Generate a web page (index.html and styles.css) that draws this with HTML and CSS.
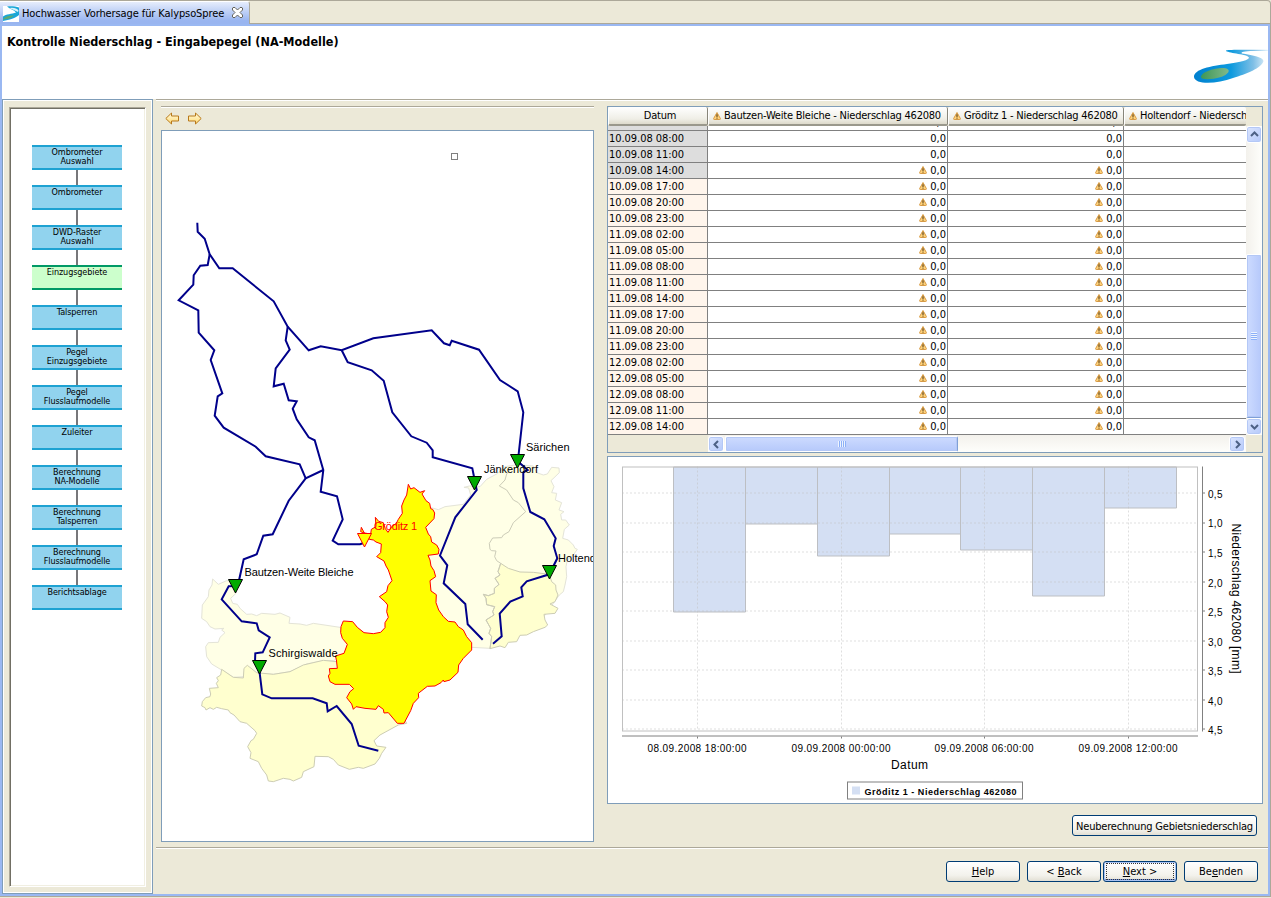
FILE: index.html
```html
<!DOCTYPE html>
<html lang="de">
<head>
<meta charset="utf-8">
<title>Hochwasser Vorhersage für KalypsoSpree</title>
<link rel="stylesheet" href="styles.css">
</head>
<body>
<svg class="defs" width="0" height="0">
  <defs>
    <linearGradient id="river" x1="0" x2="1"><stop offset="0" stop-color="#0080cf"/><stop offset=".5" stop-color="#0d9ade"/><stop offset=".8" stop-color="#7fbfe6"/><stop offset="1" stop-color="#e8f3fa"/></linearGradient>
    <linearGradient id="lake" x1="0" x2="1"><stop offset="0" stop-color="#3f9757"/><stop offset="1" stop-color="#80b98a"/></linearGradient>
    <linearGradient id="gold" x1="0" x2="0" y1="0" y2="1"><stop offset="0" stop-color="#fffbe0"/><stop offset="1" stop-color="#ffd970"/></linearGradient>
    <symbol id="warn" viewBox="0 0 8 8"><path d="M4 .5 7.4 6.6Q7.500 7.500 6.800 7.500H1.200Q.5 7.500.6 6.600Z" fill="#ffd27a" stroke="#d79a45"/><path d="M4 2.300v2.600M4 5.600v1" stroke="#3d2500" stroke-width="1"/></symbol>
    <symbol id="gauge" viewBox="-8 -1 16 16" overflow="visible"><path d="M-7 .5H7L0 14Z"/></symbol>
  </defs>
</svg>
<div class="window">
  <div class="tabbar">
    <div class="tab">
      <svg class="tab-icon" width="16" height="16" viewBox="0 0 16 16"><path d="M0 0h16v16H0z" fill="#fff"/><path d="M4 .5C8 0 13 .5 16 1.500V9C13 12 6 14 0 15V10.500C3 8 9 8 13 6.500 11 4 7 3 4 .5Z" fill="#19a6d8"/><path d="M6 2Q13 1 15.500 4.500L15 6Q10 3.500 6 2Z" fill="#d9f2fb"/><path d="M0 13Q3 9 11 9.500 8 13 0 13.500Z" fill="#5aa973"/></svg>
      <span class="tab-title">Hochwasser Vorhersage für KalypsoSpree</span>
      <svg class="tab-close" width="11" height="11" viewBox="0 0 11 11"><path d="M1 .5H3L5.500 3 8 .5H10L10.500 1V3L8 5.500 10.500 8V10L10 10.500H8L5.500 8 3 10.500H1L.5 10V8L3 5.500.5 3V1Z" fill="#fff" stroke="#66645c"/></svg>
    </div>
    <div class="tab-rest"></div>
  </div>
  <div class="frame">
    <header class="title-area">
      <h1>Kontrolle Niederschlag - Eingabepegel (NA-Modelle)</h1>
      <svg class="logo" width="75" height="36" viewBox="0 0 75 36"><path d="M33 1.500C38 .3 55 1 75 .8V2H60C52 2 47 3 49 4.500 58 6 70 8 70.500 12 69 19 53 25 40 29 24 35 2 36 1 28 1 20 18 17 34 15 48 13 56 11 56 8.500 54 5 37 4.500 33 2Z" fill="url(#river)"/><path d="M8 28C8 23 22 18.500 31 19 39 20 36 25 28 28 18 31 8 31 8 28Z" fill="url(#lake)"/></svg>
    </header>
    <div class="main">
      <aside class="side">
        <div class="flow">
          <div class="node">Ombrometer<br>Auswahl</div>
          <div class="node">Ombrometer</div>
          <div class="node">DWD-Raster<br>Auswahl</div>
          <div class="node active">Einzugsgebiete</div>
          <div class="node">Talsperren</div>
          <div class="node">Pegel<br>Einzugsgebiete</div>
          <div class="node">Pegel<br>Flusslaufmodelle</div>
          <div class="node">Zuleiter</div>
          <div class="node">Berechnung<br>NA-Modelle</div>
          <div class="node">Berechnung<br>Talsperren</div>
          <div class="node">Berechnung<br>Flusslaufmodelle</div>
          <div class="node">Berichtsablage</div>
        </div>
      </aside>
      <div class="page">
        <div class="content">
          <section class="map-col">
            <div class="map-tools">
              <svg width="14" height="13" viewBox="0 0 14 13"><path d="M.8 6.500 6.500 1V4H13.500V9H6.500V12Z" fill="url(#gold)" stroke="#b8791a"/></svg>
              <svg width="14" height="13" viewBox="0 0 14 13"><path d="M13.200 6.500 7.500 1V4H.5V9H7.500V12Z" fill="url(#gold)" stroke="#b8791a"/></svg>
            </div>
            <svg class="map" width="431" height="710" viewBox="162 131 431 710">
              <g class="areas" transform="translate(190 460) scale(.33333)">
                <path class="pale" d="M68 357 85 373 110 362 130 365 138 400 122 415 128 430 142 433 150 445 170 463 185 462 200 467 215 460 255 463 270 459 300 472 297 490 330 492 350 496 370 490 450 502 500 560 430 602 400 602 350 612 300 635 250 643 200 640 165 625 160 650 130 652 95 630 65 612 50 590 47 560 55 548 85 547 90 532 105 518 95 510 102 505 75 507 60 500 50 485 35 475 37 435 55 410 57 390 66 375Z"/>
                <path class="cream" d="M95 628 130 652 160 654 162 625 172 616 200 638 250 643 300 635 340 615 400 601 440 605 600 700 650 790 625 795 570 825 552 842 560 858 588 862 575 880 568 895 555 912 520 925 505 922 478 928 445 915 430 898 415 890 375 889 372 920 340 935 335 952 310 963 300 958 280 955 250 965 235 963 230 945 215 925 205 905 180 895 183 878 173 860 183 842 190 838 200 820 195 812 170 790 150 785 132 765 120 758 115 750 95 746 80 742 70 748 60 743 48 750 45 743 35 738 37 725 47 713 60 710 62 702 58 685 85 683 79 670 85 662 80 653 92 645Z"/>
              </g>
              <g class="areas" transform="translate(320 460) scale(.33333)">
                <path class="pale" d="M330 142 355 149 375 140 430 133 452 105 446 84 432 82 448 78 480 80 500 58 530 42 555 20 590 14 640 18 650 38 670 45 682 42 695 22 717 24 718 38 693 62 702 80 695 98 710 100 706 120 725 128 717 150 732 155 722 163 725 180 737 180 748 195 733 208 728 235 745 240 760 255 765 265 772 268 760 285 742 300 738 320 740 350 735 375 730 395 718 405 650 500 510 565 455 562 300 500 250 350Z"/>
                <path class="cream" d="M542 310 565 325 600 336 640 337 688 343 695 365 707 375 708 390 714 405 705 425 690 432 714 445 705 460 672 463 675 480 683 495 675 502 640 515 620 525 600 526 590 545 565 547 555 563 540 558 510 566 515 530 507 520 512 505 498 480 522 465 518 455 524 440 500 434 498 415 490 403 505 407 523 400 523 385 537 373 525 355 540 345 534 335Z"/>
                <path class="divide" d="M575 25 560 42 555 60 538 78 560 90 580 120 595 128 617 155 580 188 567 215 550 225 545 233 518 234 508 250 510 268 515 272 528 273 524 290 530 302 542 310 534 335 540 345 525 355 537 373 523 385 523 400 505 407 490 403 498 415 500 434 524 440 518 455 522 465 498 480 512 505 507 520 515 530 510 566"/>
                <path class="picked" d="M265 73 272 87 282 83 300 97 314 92 306 102 318 122 329 130 332 146 338 148 344 159 342 176 317 202 325 222 332 230 335 246 350 255 357 268 355 282 324 286 330 300 333 318 342 332 347 350 330 362 333 393 349 404 348 428 356 450 370 470 385 484 405 486 415 500 430 510 440 530 455 548 455 570 430 595 416 615 414 637 390 660 372 665 370 660 363 668 345 678 322 679 295 700 296 713 280 730 272 752 252 790 232 790 205 758 192 759 190 748 175 737 168 748 135 745 108 740 100 748 95 732 80 713 90 695 101 686 88 673 45 673 30 665 25 648 30 640 28 626 52 625 49 598 46 588 72 580 82 553 67 535 62 518 63 500 70 483 98 485 112 502 132 518 160 521 182 517 195 503 195 488 205 472 200 455 203 435 195 425 178 410 200 395 204 377 216 362 205 330 198 318 192 303 170 290 182 278 184 252 168 246 160 240 148 238 140 222 122 215 124 202 133 219 152 222 154 208 168 200 166 172 176 184 190 188 196 206 204 217 215 200 229 190 235 178 247 160 245 138 252 120 260 105Z"/>
              </g>
              <g class="rivers">
                <path d="M197.300 222.700 197.700 231.700 204.700 238.700 209.700 254.300 219.300 268.300H232.700L273.700 301.300 287.700 326.700 308.700 350.300 320.700 346.300 341.700 350.300 373.300 338.300 431.700 330.300 444 343.300 449.700 345.300 451.700 340.700 479 349.700 500 380 517.700 391.300 523.300 412.300 518 460 520 463.300 527.700 470 523.300 472.300V488.300L530.300 512 544.300 519.300 555.700 538.300 553.700 546 557.300 558.300 549.300 574.300 526.700 581.300 521.300 587.300 522.700 596.300 510.300 601.700 499.700 613.700 501.700 636.300 493 643.700"/>
                <path d="M341.700 350.300 347.700 362.300 371.700 370.300 383.700 380.700 392.300 412.300 411.300 436.300 426.700 442.700 432.700 450.300V457.300L472.300 468.300 476.700 490 455.300 517.300 440 555.500 447.300 565.300 443.700 583.300 465.300 604 467.700 624.300 482.700 639.700"/>
                <path d="M209.700 254.300 207.700 265 200.300 265.700 193.700 275.300 193.300 284.700 178.700 300.300 198.300 310.300 198.700 332.700 214.300 350.300 210.700 360 222.300 393.300 217.700 396.300 214.700 415.700 223.700 427.700 255.700 446.700 265.700 456.300 299.700 464.300 305.700 478.300"/>
                <path d="M287.700 326.700 285.700 340.300 289.700 349.700 275.700 368.300 273.700 386.300 283.700 383.700 288.700 400.300 296.700 401.300 292.700 408.700 296.700 419.300 308.700 437.300 314.700 440.300 323.300 470 320.700 491.700 337 496.300 342.700 519.300 332.700 540.700 338.300 544.300H360L364.300 542.700"/>
                <path d="M323.300 470 305.700 478.300 288.700 500.700 272.700 534.300 263.300 535.700 256.700 554.300 243.700 559.300 239.300 579 235 586 228.700 586.300 221.700 599.300 241.700 621.300 256.700 623.300 258.700 630.300 269.700 637.300 262.700 652.300 255.300 653.300 255 661.700 259.700 673.300 262.300 694.300 271.700 698.300H312.700L326.700 703.300 327.700 711.300 336.700 706 351.700 724 358.700 745.700 378.300 750.700"/>
              </g>
              <g class="gauges">
                <use href="#gauge" x="509.500" y="453" width="16" height="16"/>
                <use href="#gauge" x="466.500" y="475" width="16" height="16"/>
                <use href="#gauge" x="541.500" y="564" width="16" height="16"/>
                <use href="#gauge" x="227.500" y="578" width="16" height="16"/>
                <use href="#gauge" x="251.500" y="659" width="16" height="16"/>
                <use class="gauge-picked" href="#gauge" x="356.500" y="532" width="16" height="16"/>
              </g>
              <rect class="handle" x="451.500" y="153.500" width="6" height="6"/>
              <g class="labels">
                <text x="526" y="451" textLength="43.500">Särichen</text>
                <text x="484" y="473" textLength="54">Jänkendorf</text>
                <text x="558" y="562">Holtendorf</text>
                <text x="244.500" y="576" textLength="109">Bautzen-Weite Bleiche</text>
                <text x="268.500" y="657" textLength="69">Schirgiswalde</text>
                <text class="picked-label" x="374" y="530" textLength="43">Gröditz 1</text>
              </g>
            </svg>
          </section>
          <section class="data-col">
            <div class="table-box">
              <div class="table-area">
                <div class="grid-head">
                  <div class="hcell center">Datum</div>
                  <div class="hcell"><svg class="w"><use href="#warn"/></svg>Bautzen-Weite Bleiche - Niederschlag 462080</div>
                  <div class="hcell"><svg class="w"><use href="#warn"/></svg>Gröditz 1 - Niederschlag 462080</div>
                  <div class="hcell last"><svg class="w"><use href="#warn"/></svg>Holtendorf - Niederschlag 462080</div>
                </div>
                <div class="clip"><div class="row past"><b></b><i>0,0</i><i>0,0</i><i></i></div></div>
                <div class="row past"><b>10.09.08 08:00</b><i>0,0</i><i>0,0</i><i></i></div>
                <div class="row past"><b>10.09.08 11:00</b><i>0,0</i><i>0,0</i><i></i></div>
                <div class="row past"><b>10.09.08 14:00</b><i><svg class="w"><use href="#warn"/></svg>0,0</i><i><svg class="w"><use href="#warn"/></svg>0,0</i><i></i></div>
                <div class="row"><b>10.09.08 17:00</b><i><svg class="w"><use href="#warn"/></svg>0,0</i><i><svg class="w"><use href="#warn"/></svg>0,0</i><i></i></div>
                <div class="row"><b>10.09.08 20:00</b><i><svg class="w"><use href="#warn"/></svg>0,0</i><i><svg class="w"><use href="#warn"/></svg>0,0</i><i></i></div>
                <div class="row"><b>10.09.08 23:00</b><i><svg class="w"><use href="#warn"/></svg>0,0</i><i><svg class="w"><use href="#warn"/></svg>0,0</i><i></i></div>
                <div class="row"><b>11.09.08 02:00</b><i><svg class="w"><use href="#warn"/></svg>0,0</i><i><svg class="w"><use href="#warn"/></svg>0,0</i><i></i></div>
                <div class="row"><b>11.09.08 05:00</b><i><svg class="w"><use href="#warn"/></svg>0,0</i><i><svg class="w"><use href="#warn"/></svg>0,0</i><i></i></div>
                <div class="row"><b>11.09.08 08:00</b><i><svg class="w"><use href="#warn"/></svg>0,0</i><i><svg class="w"><use href="#warn"/></svg>0,0</i><i></i></div>
                <div class="row"><b>11.09.08 11:00</b><i><svg class="w"><use href="#warn"/></svg>0,0</i><i><svg class="w"><use href="#warn"/></svg>0,0</i><i></i></div>
                <div class="row"><b>11.09.08 14:00</b><i><svg class="w"><use href="#warn"/></svg>0,0</i><i><svg class="w"><use href="#warn"/></svg>0,0</i><i></i></div>
                <div class="row"><b>11.09.08 17:00</b><i><svg class="w"><use href="#warn"/></svg>0,0</i><i><svg class="w"><use href="#warn"/></svg>0,0</i><i></i></div>
                <div class="row"><b>11.09.08 20:00</b><i><svg class="w"><use href="#warn"/></svg>0,0</i><i><svg class="w"><use href="#warn"/></svg>0,0</i><i></i></div>
                <div class="row"><b>11.09.08 23:00</b><i><svg class="w"><use href="#warn"/></svg>0,0</i><i><svg class="w"><use href="#warn"/></svg>0,0</i><i></i></div>
                <div class="row"><b>12.09.08 02:00</b><i><svg class="w"><use href="#warn"/></svg>0,0</i><i><svg class="w"><use href="#warn"/></svg>0,0</i><i></i></div>
                <div class="row"><b>12.09.08 05:00</b><i><svg class="w"><use href="#warn"/></svg>0,0</i><i><svg class="w"><use href="#warn"/></svg>0,0</i><i></i></div>
                <div class="row"><b>12.09.08 08:00</b><i><svg class="w"><use href="#warn"/></svg>0,0</i><i><svg class="w"><use href="#warn"/></svg>0,0</i><i></i></div>
                <div class="row"><b>12.09.08 11:00</b><i><svg class="w"><use href="#warn"/></svg>0,0</i><i><svg class="w"><use href="#warn"/></svg>0,0</i><i></i></div>
                <div class="row"><b>12.09.08 14:00</b><i><svg class="w"><use href="#warn"/></svg>0,0</i><i><svg class="w"><use href="#warn"/></svg>0,0</i><i></i></div>
                <div class="hscroll">
                  <div class="sbtn"><svg width="9" height="9" viewBox="0 0 9 9"><path d="M6 1 2.500 4.500 6 8"/></svg></div>
                  <div class="hthumb"><span class="grip"></span></div>
                  <div class="space"></div>
                  <div class="sbtn"><svg width="9" height="9" viewBox="0 0 9 9"><path d="M3 1 6.500 4.500 3 8"/></svg></div>
                </div>
              </div>
              <div class="vscroll">
                <div class="sbtn"><svg width="9" height="9" viewBox="0 0 9 9"><path d="M1 6 4.500 2.500 8 6"/></svg></div>
                <div class="space"></div>
                <div class="vthumb"><span class="grip"></span></div>
                <div class="sbtn"><svg width="9" height="9" viewBox="0 0 9 9"><path d="M1 3 4.500 6.500 8 3"/></svg></div>
              </div>
            </div>
            <svg class="chart" width="654" height="345" viewBox="608 458 654 345">
              <g class="plot">
                <path class="bars" d="M673.500 467.500H745.500V612.500H673.500ZM745.500 467.500H817.500V524.500H745.500ZM817.500 467.500H889.500V556.500H817.500ZM889.500 467.500H960.500V534.500H889.500ZM960.500 467.500H1032.500V550.500H960.500ZM1032.500 467.500H1104.500V596.500H1032.500ZM1104.500 467.500H1176.500V508.500H1104.500Z"/>
                <path class="gridlines" d="M697.500 467V731M841.500 467V731M984.500 467V731M1128.500 467V731M622 493.500H1197M622 523.500H1197M622 552.500H1197M622 582.500H1197M622 611.500H1197M622 641.500H1197M622 670.500H1197M622 700.500H1197M622 729.500H1197"/>
                <rect class="plot-border" x="622.500" y="467.500" width="575" height="264"/>
                <path class="axis" d="M622 736.500H1198M1202.500 467V732M697.500 737V739M841.500 737V739M984.500 737V739M1128.500 737V739M1203 493.500H1205M1203 523.500H1205M1203 552.500H1205M1203 582.500H1205M1203 611.500H1205M1203 641.500H1205M1203 670.500H1205M1203 700.500H1205M1203 729.500H1205"/>
              </g>
              <g class="ticks">
                <text x="1208" y="498" textLength="14.500">0,5</text><text x="1208" y="527" textLength="14.500">1,0</text><text x="1208" y="557" textLength="14.500">1,5</text><text x="1208" y="587" textLength="14.500">2,0</text><text x="1208" y="616" textLength="14.500">2,5</text><text x="1208" y="646" textLength="14.500">3,0</text><text x="1208" y="675" textLength="14.500">3,5</text><text x="1208" y="705" textLength="14.500">4,0</text><text x="1208" y="734" textLength="14.500">4,5</text>
                <text x="647.500" y="752" textLength="99">08.09.2008 18:00:00</text>
                <text x="791.500" y="752" textLength="99">09.09.2008 00:00:00</text>
                <text x="934.500" y="752" textLength="99">09.09.2008 06:00:00</text>
                <text x="1078.500" y="752" textLength="99">09.09.2008 12:00:00</text>
              </g>
              <text class="axis-name" x="891" y="769" textLength="37">Datum</text>
              <text class="axis-name" transform="translate(1231.500 524) rotate(90)" textLength="150">Niederschlag 462080 [mm]</text>
              <rect class="legend-box" x="847.500" y="782.500" width="175" height="17"/>
              <rect x="852" y="787" width="8" height="8" fill="#d4dff3"/>
              <text class="legend-text" x="864.500" y="795" textLength="152">Gröditz 1 - Niederschlag 462080</text>
            </svg>
            <div class="action"><button class="btn wide">Neuberechnung Gebietsniederschlag</button></div>
          </section>
        </div>
        <footer class="wizard">
          <button class="btn"><span><u>H</u>elp</span></button>
          <button class="btn back"><span>&lt; <u>B</u>ack</span></button>
          <button class="btn default"><span><u>N</u>ext &gt;</span></button>
          <button class="btn finish"><span>Be<u>e</u>nden</span></button>
        </footer>
      </div>
    </div>
  </div>
</div>
</body>
</html>
```
FILE: styles.css
```css
* { box-sizing: border-box; }
body {
  margin: 0;
  width: 1271px;
  height: 898px;
  overflow: hidden;
  background: #ece9d8;
  color: #000;
  font: 11px/14px "DejaVu Sans Condensed", "DejaVu Sans", sans-serif;
  font-stretch: condensed;
}
.defs { display: block; position: absolute; }
.window { height: 897px; width: 1271px; border: 1px solid #aca899; border-left: 0; border-top-right-radius: 4px; display: flex; flex-direction: column; }
.tabbar { height: 23px; display: flex; flex: none; }
.tab { width: 250px; display: flex; align-items: center; padding: 2px 0 0 3px; border-right: 1px solid #aca899; border-top: 1px solid #fff; border-top-right-radius: 3px; background: linear-gradient(#e6edfc, #99b5f0 85%); }
.tab-icon { flex: none; }
.tab-title { margin-left: 3px; width: 203px; white-space: nowrap; font-size: 11px; letter-spacing: -.1px; }
.tab-close { margin-left: 7px; margin-bottom: 3px; flex: none; }
.tab-rest { flex: 1; border-bottom: 1px solid #aca899; }
.frame { flex: 1; border: 2px solid #9ab8f2; display: flex; flex-direction: column; min-height: 0; }
.title-area { height: 73px; flex: none; background: #fff; display: flex; justify-content: space-between; padding: 9px 0 0 5px; }
h1 { margin: 0; font-size: 12.500px; line-height: 14px; font-weight: bold; letter-spacing: .02px; white-space: nowrap; }
.logo { margin-top: 14px; }
.main { flex: 1; display: flex; min-height: 0; }
.side { width: 151px; flex: none; border: 1px solid #7f9db9; padding: 7px 6px 6px 6px; box-shadow: inset 0 0 0 1px #fff; display: flex; }
.flow { flex: 1; background: #fff; border: 1px solid; border-color: #aca899 #fff #fff #aca899; box-shadow: inset 1px 1px #716f64, inset -1px -1px #f1efe2; padding: 37px 0 0 22px; display: flex; flex-direction: column; gap: 15px; }
.node { position: relative; width: 90px; height: 25px; background: #91d3ee; border: solid #1ea2d2; border-width: 2px 0; text-align: center; font-size: 9px; line-height: 9px; white-space: nowrap; letter-spacing: -.1px; padding-top: 1px; }
.node.active { background: #ccffcc; border-color: #009966; }
.node:not(:last-child)::after { content: ""; position: absolute; left: 44px; top: 23px; width: 2px; height: 15px; background: #77777a; }
.page { flex: 1; margin-left: 3px; display: flex; flex-direction: column; border-top: 1px solid #aca899; box-shadow: inset 0 1px #fff; }
.content { height: 747px; display: flex; justify-content: space-between; padding: 6px 5px 0; }
.map-col { width: 433px; }
.map-tools { height: 24px; border-top: 1px solid #aca899; box-shadow: inset 0 1px #fff; padding: 5px 0 0 4px; display: flex; gap: 9px; }
.map { display: block; background: #fff; border: 1px solid #7f9db9; width: 433px; height: 712px; }
.areas path { stroke-width: 1; vector-effect: non-scaling-stroke; }
.pale { fill: #ffffe6; stroke: #e4e4d8; }
.cream { fill: #ffffcf; stroke: #cdcdb4; }
.divide { fill: none; stroke: #ccccb8; }
.picked { fill: #ff0; stroke: #f00; }
.rivers path { fill: none; stroke: #00008b; stroke-width: 2; }
.gauges { fill: #00aa00; stroke: #000; }
.gauge-picked { fill: #ff0; stroke: #f00; }
.handle { fill: #fff; stroke: #808080; }
.labels { font: 11px "Liberation Sans", Arial, sans-serif; }
.picked-label { fill: #f00; }
.data-col { width: 656px; display: flex; flex-direction: column; }
.table-box { height: 347px; border: 1px solid #7f9db9; display: flex; flex: none; }
.table-area { width: 638px; overflow: hidden; }
.grid-head, .row { display: grid; grid-template-columns: 100px 240px 176px 122px; }
.grid-head { height: 19px; }
.hcell { height: 19px; padding: 1px 0 0 4px; line-height: 16px; white-space: nowrap; overflow: hidden; display: flex; align-items: center; border-right: 1px solid #87857a; border-bottom: 2px solid #9a988c; border-radius: 2px; background: linear-gradient(#fff, #efeee6 70%, #dddacb); border-left: 1px solid #fff; letter-spacing: -.22px; }
.hcell.center { justify-content: center; }
.hcell.last { border-right: 0; }
.w { width: 8px; height: 8px; margin-right: 3px; flex: none; }
.clip { height: 5px; display: flex; align-items: flex-end; overflow: hidden; }
.row { height: 16px; flex: none; }
.row b, .row i { font-weight: normal; font-style: normal; border-right: 1px solid #808080; border-bottom: 1px solid #808080; background: #fff; line-height: 15px; white-space: nowrap; }
.row b { background: #fff5ec; padding-left: 1px; letter-spacing: -.05px; }
.row.past b { background: #ddd; }
.row i { display: flex; align-items: center; justify-content: flex-end; padding-right: 1px; }
.row .w { margin-bottom: 1px; }
.row i:last-child { border-right: 0; }
.hscroll { height: 17px; margin-left: 100px; background: linear-gradient(#f3f1ec, #fefefb); display: flex; padding: 1px 1px 0 0; }
.vscroll { width: 16px; margin-top: 19px; height: 309px; background: linear-gradient(90deg, #f3f1ec, #fefefb); display: flex; flex-direction: column; }
.space { flex: 1; }
.sbtn { width: 16px; height: 16px; border: 1px solid #fff; box-shadow: inset 0 0 0 1px #b4c8f6; border-radius: 3px; background: linear-gradient(135deg, #dce6ff, #b5c9fa); display: flex; align-items: center; justify-content: center; flex: none; }
.vscroll .sbtn { height: 17px; }
.sbtn path { fill: none; stroke: #4d6185; stroke-width: 2; }
.hthumb { width: 233px; margin-left: 1px; display: flex; align-items: center; justify-content: center; border: 1px solid #fff; border-right-color: #7f9fd6; border-radius: 2px; box-shadow: inset 0 0 0 1px #b4c8f6; background: linear-gradient(#cddbff, #b6c9fb); }
.vthumb { height: 164px; display: flex; align-items: center; justify-content: center; border: 1px solid #fff; border-bottom-color: #7f9fd6; border-radius: 2px; box-shadow: inset 0 0 0 1px #b4c8f6; background: linear-gradient(90deg, #cddbff, #b6c9fb); }
.hthumb .grip { width: 8px; height: 6px; background: repeating-linear-gradient(90deg, #eef4fe 0 1px, #8cb0f8 1px 2px); }
.vthumb .grip { width: 6px; height: 8px; background: repeating-linear-gradient(#eef4fe 0 1px, #8cb0f8 1px 2px); }
.chart { display: block; flex: none; margin-top: 3px; width: 656px; height: 348px; border: 1px solid #7f9db9; background: #fff; }
.plot path, .plot rect { fill: none; }
.plot .bars { fill: #d4dff3; stroke: #bdbfc3; }
.plot .gridlines { stroke: #c0c0c0; stroke-opacity: .5; stroke-dasharray: 2 2; }
.plot-border { stroke: #c0c0c0; }
.axis { stroke: #808080; }
.ticks { font: 10px "Liberation Sans", Arial, sans-serif; }
.axis-name { font: 12px "Liberation Sans", Arial, sans-serif; }
.legend-box { fill: #fff; stroke: #808080; }
.legend-text { font: bold 9px "Liberation Sans", Arial, sans-serif; }
.action { display: flex; justify-content: flex-end; padding: 11px 6px 0 0; }
.btn { width: 74px; height: 21px; padding: 0; border: 1px solid #003c74; border-radius: 3px; color: #000; background: linear-gradient(#fff, #f3f2ec 70%, #e2dfd4); font: inherit; line-height: 17px; display: block; white-space: nowrap; }
.btn.wide { width: 185px; letter-spacing: -.2px; padding-top: 1px; }
.wizard { border-top: 1px solid #aca899; box-shadow: inset 0 1px #fff; flex: 1; display: flex; justify-content: flex-end; padding: 13px 10px 0 0; }
.back { margin-left: 7px; }
.default { margin-left: 2px; box-shadow: inset 0 0 0 1px #a9c3f2, inset 0 -2px #6a8ee0; }
.default span { display: block; margin: 0 2px; height: 17px; line-height: 15px; border: 1px dotted #333; }
.finish { margin-left: 7px; }
```
